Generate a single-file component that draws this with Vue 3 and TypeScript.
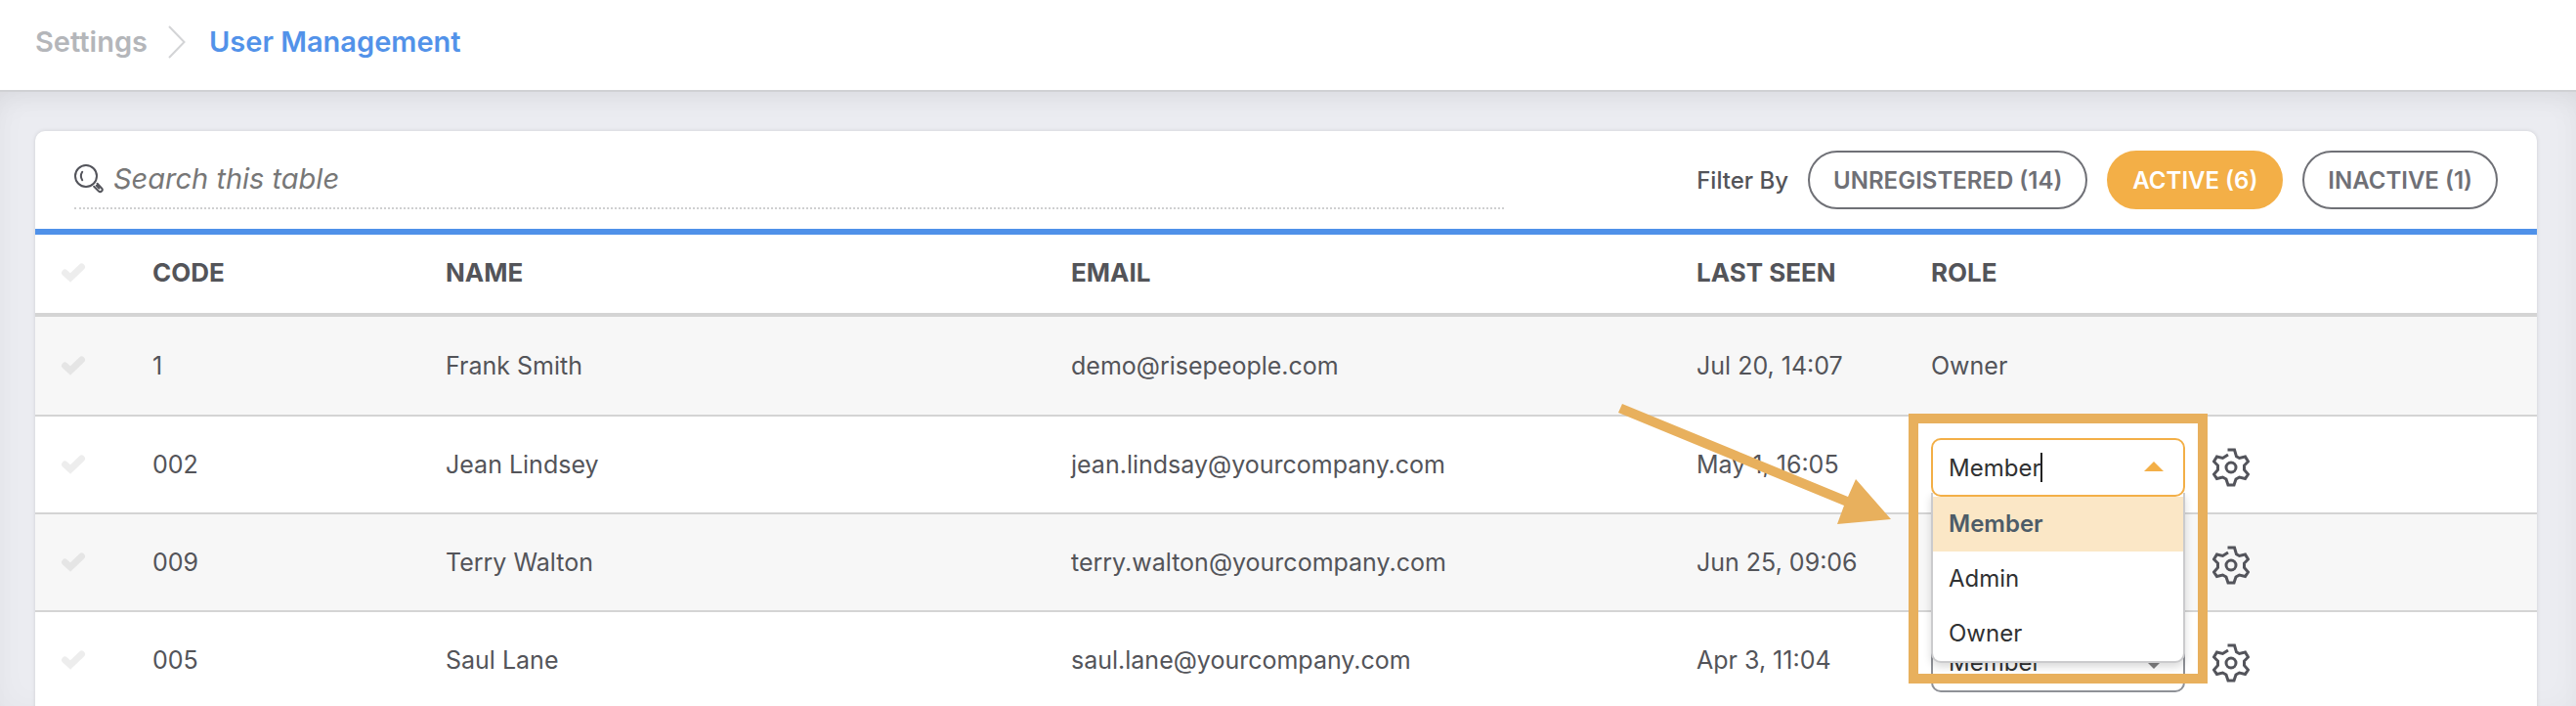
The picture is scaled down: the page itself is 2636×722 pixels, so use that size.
<script setup lang="ts">
import { computed, ref } from 'vue'

type Role = 'Member' | 'Admin' | 'Owner'

interface User {
  code: string
  name: string
  email: string
  lastSeen: string
  role: Role
  editable: boolean
}

interface Filter {
  id: string
  label: string
  count: number
}

const roles: Role[] = ['Member', 'Admin', 'Owner']

const filters: Filter[] = [
  { id: 'unregistered', label: 'UNREGISTERED', count: 14 },
  { id: 'active', label: 'ACTIVE', count: 6 },
  { id: 'inactive', label: 'INACTIVE', count: 1 },
]

const users = ref<User[]>([
  { code: '1', name: 'Frank Smith', email: 'demo@risepeople.com', lastSeen: 'Jul 20, 14:07', role: 'Owner', editable: false },
  { code: '002', name: 'Jean Lindsey', email: 'jean.lindsay@yourcompany.com', lastSeen: 'May 1, 16:05', role: 'Member', editable: true },
  { code: '009', name: 'Terry Walton', email: 'terry.walton@yourcompany.com', lastSeen: 'Jun 25, 09:06', role: 'Member', editable: true },
  { code: '005', name: 'Saul Lane', email: 'saul.lane@yourcompany.com', lastSeen: 'Apr 3, 11:04', role: 'Member', editable: true },
])

const activeFilter = ref('active')
const search = ref('')
const openCode = ref('002')
const selected = ref<string[]>([])

const allSelected = computed({
  get: () => selected.value.length === users.value.length,
  set: (on: boolean) => {
    selected.value = on ? users.value.map((u) => u.code) : []
  },
})

function pick(user: User, role: Role) {
  user.role = role
  openCode.value = ''
}
</script>

<template>
  <div class="page">
    <header class="topbar">
      <nav class="crumbs" aria-label="Breadcrumb">
        <a class="crumb" href="#settings">Settings</a>
        <svg class="chevron" viewBox="0 0 18 34" aria-hidden="true"><path d="M1 1 L16.500 17 L1 33" /></svg>
        <a class="crumb current" href="#users" aria-current="page">User Management</a>
      </nav>
    </header>

    <main class="content">
      <section class="card">
        <div class="toolbar">
          <label class="search">
            <svg class="search-icon" viewBox="0 0 30 30" aria-hidden="true">
              <circle cx="12" cy="12" r="11" />
              <path d="M8.200 7.800 Q5.500 12 8.200 16.200" />
              <path d="M20.200 22.800 L25 27.600 A2.200 2.200 0 0 0 28.200 24.600 L23.600 19.800 M22.800 21.800 L25.400 24.600" />
            </svg>
            <input v-model="search" class="search-input" type="text" placeholder="Search this table" aria-label="Search this table" />
          </label>
          <div class="filters">
            <span class="filter-label">Filter By</span>
            <button
              v-for="f in filters"
              :key="f.id"
              type="button"
              class="pill"
              :class="{ on: activeFilter === f.id }"
              :aria-pressed="activeFilter === f.id"
              @click="activeFilter = f.id"
            >{{ f.label }} ({{ f.count }})</button>
          </div>
        </div>

        <table class="users">
          <colgroup>
            <col class="c-check" />
            <col class="c-code" />
            <col />
            <col />
            <col class="c-seen" />
            <col />
          </colgroup>
          <thead>
            <tr>
              <th class="check-cell">
                <label class="check">
                  <input v-model="allSelected" type="checkbox" aria-label="Select all users" />
                  <svg viewBox="0 0 26 20" aria-hidden="true"><path d="M4.500 10 L10 15 L21.500 4" /></svg>
                </label>
              </th>
              <th>CODE</th>
              <th>NAME</th>
              <th>EMAIL</th>
              <th>LAST SEEN</th>
              <th>ROLE</th>
            </tr>
          </thead>
          <tbody>
            <tr v-for="u in users" :key="u.code">
              <td class="check-cell">
                <label class="check">
                  <input v-model="selected" type="checkbox" :value="u.code" :aria-label="`Select ${u.name}`" />
                  <svg viewBox="0 0 26 20" aria-hidden="true"><path d="M4.500 10 L10 15 L21.500 4" /></svg>
                </label>
              </td>
              <td>{{ u.code }}</td>
              <td>{{ u.name }}</td>
              <td>{{ u.email }}</td>
              <td>{{ u.lastSeen }}</td>
              <td>
                <template v-if="!u.editable">{{ u.role }}</template>
                <div v-else class="role-cell">
                  <div v-if="openCode === u.code" class="combo">
                    <input
                      class="role-box combo-input"
                      type="text"
                      role="combobox"
                      aria-expanded="true"
                      aria-controls="role-options"
                      :aria-label="`Role of ${u.name}`"
                      :value="u.role"
                    />
                    <i class="text-caret"></i>
                    <svg class="arrow up" viewBox="0 0 20 10" aria-hidden="true"><path d="M0 10 L10 0 L20 10 Z" /></svg>
                    <ul id="role-options" class="options" role="listbox">
                      <li
                        v-for="r in roles"
                        :key="r"
                        role="option"
                        class="option"
                        :class="{ chosen: r === u.role }"
                        :aria-selected="r === u.role"
                        @click="pick(u, r)"
                      >{{ r }}</li>
                    </ul>
                    <div class="callout"></div>
                    <svg class="pointer" viewBox="0 0 280 124" aria-hidden="true">
                      <path d="M4 0 L235 95 L243 77 L279 118 L224 123 L231 104 L0 9 Z" />
                    </svg>
                  </div>
                  <div v-else class="combo">
                    <select v-model="u.role" class="role-box" :aria-label="`Role of ${u.name}`">
                      <option v-for="r in roles" :key="r" :value="r">{{ r }}</option>
                    </select>
                    <svg class="arrow" viewBox="0 0 20 10" aria-hidden="true"><path d="M0 0 L10 10 L20 0 Z" /></svg>
                  </div>
                  <button type="button" class="gear" :aria-label="`Settings for ${u.name}`">
                    <svg viewBox="0 0 38 40" aria-hidden="true">
                      <path d="M15.500 2 H22.500 L24.500 8.800 L27.500 10.500 L33.500 9 L36.500 14 L32.500 18 V22.500 L36.500 27 L33.500 31.500 L27.500 30 L24 32 L22 38 H16 L14 32 L10.500 30 L4.500 31.500 L1.500 27 L5.500 22.500 V18 L1.500 14 L4.500 9 L10.500 10.500 L16 7" />
                      <circle cx="19" cy="20" r="5" />
                    </svg>
                  </button>
                </div>
              </td>
            </tr>
          </tbody>
        </table>
      </section>
    </main>
  </div>
</template>

<style>
html {
  scrollbar-width: none;
}
body {
  background: #ebecf1;
}
</style>

<style scoped>
.page {
  min-height: 100vh;
  display: flex;
  flex-direction: column;
  font-family: Inter, "Liberation Sans", sans-serif;
  font-size: 25px;
  color: #535459;
}
.page *,
.page {
  box-sizing: border-box;
}
.topbar {
  height: 94px;
  padding: 0 36px;
  display: flex;
  align-items: center;
  background: #fff;
  border-bottom: 2px solid #d0d1d4;
}
.crumbs {
  display: flex;
  align-items: center;
  padding-bottom: 6px;
  font-size: 29px;
  font-weight: 600;
  line-height: 36px;
}
.crumb {
  color: #b4b6ba;
  text-decoration: none;
}
.crumb.current {
  color: #5292e9;
}
.chevron {
  width: 18px;
  height: 34px;
  margin: 0 24px 0 21px;
  fill: none;
  stroke: #d3d4d6;
  stroke-width: 2;
}
.content {
  flex: 1;
  padding: 40px 40px 0 36px;
  background: #ebecf1;
  box-shadow: inset 0 16px 32px -16px rgba(0, 0, 0, 0.08), inset 0 0 32px rgba(0, 0, 0, 0.03);
}
.card {
  background: #fff;
  border-radius: 10px 10px 0 0;
  box-shadow: 0 0 4px rgba(0, 0, 0, 0.12);
}
.toolbar {
  height: 106px;
  padding: 0 40px;
  display: flex;
  align-items: center;
  justify-content: space-between;
  border-bottom: 6px solid #4f91e9;
}
.search {
  width: 59%;
  height: 60px;
  display: flex;
  align-items: center;
  gap: 10px;
  border-bottom: 2px dotted #cfd0d1;
}
.search-icon {
  flex: none;
  width: 30px;
  height: 30px;
  fill: none;
  stroke: #53545b;
  stroke-width: 2;
  stroke-linecap: round;
}
.search-input {
  flex: 1;
  min-width: 0;
  padding: 0;
  border: 0;
  outline: 0;
  background: none;
  font: italic 29px/36px Inter, "Liberation Sans", sans-serif;
  color: #535459;
}
.search-input::placeholder {
  color: #777;
  opacity: 1;
}
.filters {
  display: flex;
  align-items: center;
  gap: 20px;
  white-space: nowrap;
}
.filter-label {
  font-size: 24px;
  font-weight: 500;
}
.pill {
  height: 60px;
  padding: 2px 24px 0;
  border: 2px solid #6f7076;
  border-radius: 30px;
  background: #fff;
  font: 600 24px/28px Inter, "Liberation Sans", sans-serif;
  color: #6f7076;
}
.pill.on {
  border-color: #f3af47;
  background: #f3af47;
  color: #fff;
}
.users {
  width: 100%;
  table-layout: fixed;
  border-spacing: 0;
  line-height: 32px;
}
.c-check {
  width: 100px;
}
.c-code {
  width: 300px;
}
.c-seen {
  width: 240px;
}
th,
td {
  padding: 0 0 0 20px;
  text-align: left;
  vertical-align: middle;
  white-space: nowrap;
}
th {
  height: 84px;
  padding-bottom: 2px;
  border-bottom: 4px solid #d4d4d4;
  font-size: 26px;
  font-weight: 700;
}
td {
  height: 100px;
  border-bottom: 2px solid #d4d4d4;
}
tbody tr:first-child td {
  height: 102px;
}
tbody tr:nth-child(odd) {
  background: #f7f7f7;
}
.check-cell {
  padding-left: 26px;
}
.check {
  position: relative;
  display: flex;
  width: 26px;
  height: 20px;
}
.check input {
  position: absolute;
  inset: 0;
  width: 100%;
  height: 100%;
  margin: 0;
  opacity: 0;
}
.check svg {
  width: 26px;
  height: 20px;
  fill: none;
  stroke: rgba(0, 0, 0, 0.07);
  stroke-width: 7;
  stroke-linecap: round;
}
.check input:checked + svg {
  stroke: #4f91e9;
}
.role-cell {
  display: flex;
  align-items: center;
  gap: 28px;
  padding-top: 6px;
}
.combo {
  position: relative;
  width: 260px;
  height: 60px;
}
.role-box {
  width: 100%;
  height: 100%;
  padding: 0 16px;
  border: 2px solid #8f9197;
  border-radius: 10px;
  outline: 0;
  appearance: none;
  background: #fff;
  font: 24px/30px Inter, "Liberation Sans", sans-serif;
  color: #303132;
}
.combo-input {
  position: relative;
  z-index: 3;
  border-color: #f3af47;
}
.text-caret {
  position: absolute;
  z-index: 4;
  top: 15px;
  left: 112px;
  width: 2px;
  height: 30px;
  background: #222;
}
.arrow {
  position: absolute;
  right: 22px;
  top: 26px;
  width: 20px;
  height: 10px;
  fill: #808082;
  pointer-events: none;
}
.arrow.up {
  z-index: 4;
  top: 24px;
  fill: #f3af47;
}
.options {
  position: absolute;
  z-index: 2;
  top: 56px;
  left: 0;
  right: 0;
  margin: 0;
  padding: 4px 0 0;
  list-style: none;
  border: 2px solid #cbcbcd;
  border-top: 0;
  border-radius: 0 0 10px 10px;
  background: #fff;
  box-shadow: 0 4px 8px rgba(0, 0, 0, 0.15);
  overflow: hidden;
}
.option {
  padding: 0 16px;
  font-size: 24px;
  line-height: 56px;
  color: #303132;
}
.option.chosen {
  background: #fbe7c6;
  font-weight: 600;
  color: #4d5c68;
}
.callout {
  position: absolute;
  z-index: 5;
  top: -25px;
  left: -23px;
  width: 306px;
  height: 276px;
  border: 10px solid #e8b05d;
  pointer-events: none;
}
.pointer {
  position: absolute;
  z-index: 5;
  top: -35px;
  left: -320px;
  width: 280px;
  height: 124px;
  fill: #e8b05d;
  pointer-events: none;
}
.gear {
  width: 38px;
  height: 40px;
  padding: 0;
  border: 0;
  background: none;
}
.gear svg {
  display: block;
  width: 38px;
  height: 40px;
  fill: none;
  stroke: #53545b;
  stroke-width: 3;
}
</style>
